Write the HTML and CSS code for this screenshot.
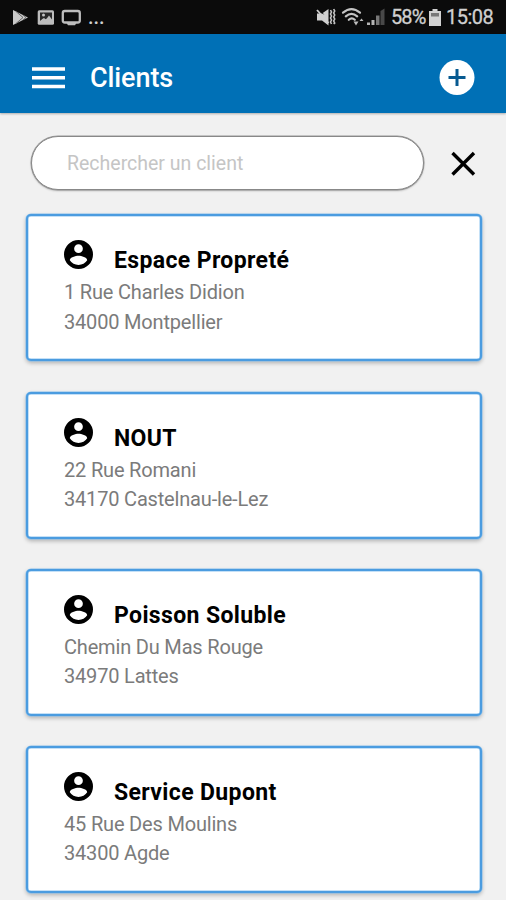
FILE: index.html
```html
<!DOCTYPE html>
<html lang="fr">
<head>
<meta charset="utf-8">
<title>Clients</title>
<link rel="stylesheet" href="styles.css">
</head>
<body>
<svg class="defs" width="0" height="0" aria-hidden="true">
  <symbol id="account" viewBox="2 2 20 20"><path fill-rule="evenodd" d="M12 2a10 10 0 1 0 0 20 10 10 0 0 0 0-20zm0 3a3 3 0 1 1 0 6 3 3 0 0 1 0-6zm0 14.2a7.2 7.2 0 0 1-6-3.2c0-2 4-3.1 6-3.1s6 1.100 6 3.100a7.200 7.200 0 0 1-6 3.200z"/></symbol>
</svg>
<div class="status">
  <svg class="status-icons" width="70" height="34" viewBox="0 0 70 34">
    <path d="M1 10v15l15-7.500z" fill="#c9c9c9"/>
    <path d="M4 11.500l7 6-7 6M11 15l3 2.500-3 2.500" fill="none" stroke="#666" stroke-width="1"/>
    <rect x="25.700" y="10.200" width="16.300" height="14.600" rx="1.500" fill="#bdbdbd"/>
    <path d="M28 12.500h12v8l-3.500-3-3 2-2.500-1-3 3z" fill="#292929"/>
    <circle cx="31.500" cy="15" r="1.500" fill="#c4c4c4"/>
    <path d="M28 21l4-3 2 1.500 3-4 3 4v3H28z" fill="#bdbdbd"/>
    <rect x="50.800" y="11" width="17" height="11.500" rx="2" fill="none" stroke="#bdbdbd" stroke-width="2.300"/>
    <path d="M54.500 23h10l-1.500 2.200h-7z" fill="#bdbdbd"/>
  </svg>
  <span class="dots">...</span>
  <svg class="radio" width="72" height="34" viewBox="315 0 72 34">
    <path d="M317 13.500h5l6.500-4.500v16.500l-6.500-5h-5z" fill="#d0d0d0"/>
    <path d="M317 10l11.500 13" stroke="#d0d0d0" stroke-width="1.800"/>
    <path d="M319.500 10l4 4.300" stroke="#0b0b0b" stroke-width="1"/>
    <path d="M330.500 10l1 2-1 2 1 2-1 2 1 2-1 2 1 2M333.700 9l1 2-1 2 1 2-1 2 1 2-1 2 1 2-1 1" fill="none" stroke="#c4c4c4" stroke-width="1.600"/>
    <g fill="none" stroke="#c4c4c4" stroke-width="2.200" stroke-linecap="round">
      <path d="M343 12.700q8.500-7 17 0M345.800 16.300q5.700-5 11.400 0M348.800 19.800q3-2.700 6 0"/>
    </g>
    <path d="M353.500 21.500h5L356 25.500zM359.500 21h4L361.500 18.500z" fill="#bdbdbd"/>
    <path d="M367 22.500h3V25h-3zM371.500 20h3v5h-3z" fill="#b5b5b5"/>
    <path d="M376 15.500h3.500V25H376z" fill="#777"/>
    <path d="M380.500 11l4-2.500V25h-4z" fill="#484848"/>
  </svg>
  <span class="percent">58%</span>
  <svg class="battery" width="12" height="17" viewBox="0 0 12 17">
    <path d="M3.500 0h5v2H12v15H0V2h3.500z" fill="#d2d2d2"/>
    <path d="M2 4h8v3.500H2z" fill="#777"/>
  </svg>
  <span class="clock">15:08</span>
</div>
<header class="bar">
  <svg class="menu" width="33" height="22" viewBox="0 0 33 22"><path d="M0 2h33M0 10.700h33M0 19.500h33" stroke="#fff" stroke-width="3.600"/></svg>
  <h1 class="title">Clients</h1>
  <svg class="add" width="36" height="36" viewBox="0 0 36 36"><circle cx="18" cy="17.500" r="17.500" fill="#fff"/><path d="M18 9v17M9.500 17.500h17" stroke="#075a91" stroke-width="3"/></svg>
</header>
<main class="content">
  <div class="search">
    <div class="field">Rechercher un client</div>
    <svg class="clear" width="26" height="26" viewBox="0 0 26 26"><path d="M2.500 3l21.500 21.500M24 3L2.500 24.500" stroke="#000" stroke-width="3.400"/></svg>
  </div>
  <div class="list">
    <article class="card">
      <div class="head"><svg class="avatar"><use href="#account"/></svg><h2 class="name">Espace Propreté</h2></div>
      <p class="line">1 Rue Charles Didion</p>
      <p class="line">34000 Montpellier</p>
    </article>
    <article class="card">
      <div class="head"><svg class="avatar"><use href="#account"/></svg><h2 class="name">NOUT</h2></div>
      <p class="line">22 Rue Romani</p>
      <p class="line">34170 Castelnau-le-Lez</p>
    </article>
    <article class="card">
      <div class="head"><svg class="avatar"><use href="#account"/></svg><h2 class="name">Poisson Soluble</h2></div>
      <p class="line">Chemin Du Mas Rouge</p>
      <p class="line">34970 Lattes</p>
    </article>
    <article class="card">
      <div class="head"><svg class="avatar"><use href="#account"/></svg><h2 class="name">Service Dupont</h2></div>
      <p class="line">45 Rue Des Moulins</p>
      <p class="line">34300 Agde</p>
    </article>
  </div>
</main>
</body>
</html>
```

FILE: styles.css
```css
* { box-sizing: border-box; }
body {
  margin: 0;
  height: 900px;
  overflow: hidden;
  background: #f1f1f1;
  font-family: Roboto, "Liberation Sans", sans-serif;
}
h1, h2, p { margin: 0; }
.defs { position: absolute; }
.status {
  display: flex;
  align-items: center;
  height: 34px;
  padding-left: 12px;
  background: #0b0b0b;
  color: #d0d0d0;
  font-size: 20px;
  line-height: 37px;
}
.status svg { flex: none; }
.dots { width: 20px; margin-left: 6px; font-weight: 500; }
.radio { margin-left: 207px; }
.percent { width: 34px; margin-left: 4px; letter-spacing: -0.9px; -webkit-text-stroke: .3px #d0d0d0; }
.battery { margin-left: 4px; }
.clock { margin-left: 5px; letter-spacing: -0.5px; -webkit-text-stroke: .3px #d0d0d0; }
.bar {
  display: flex;
  align-items: center;
  height: 79px;
  padding: 8px 31px 0 32px;
  background: #0070b6;
  box-shadow: 0 1px 2px rgba(0, 0, 0, .28);
}
.title {
  margin-left: 25px;
  color: #fff;
  font-size: 27px;
  font-weight: 500;
  letter-spacing: -0.1px;
  line-height: 38px;
}
.add { margin-left: auto; }
.content { padding: 23px 24px 0 26px; }
.search { display: flex; align-items: center; padding-left: 5px; }
.field {
  width: 393px;
  height: 54px;
  padding-left: 35px;
  border: 1px solid #888;
  border-radius: 27px;
  background: #fff;
  box-shadow: 0 0 0 .5px #999, 0 1px 2px rgba(0, 0, 0, .25);
  color: #c5c5c5;
  font-size: 19.500px;
  line-height: 53px;
}
.clear { margin-left: 26px; }
.list { display: grid; gap: 30.200px; margin-top: 24.400px; }
.card {
  height: 147px;
  padding: 24px 36px 0;
  border: 2px solid #4b9ce0;
  border-radius: 5px;
  background: #fff;
  box-shadow: inset 0 0 0 .5px #8ac2ef, 0 0 0 .5px #8ac2ef, 0 2px 4px rgba(0, 0, 0, .28);
}
.head { display: flex; height: 38px; }
.avatar { width: 29px; height: 29px; }
.name {
  margin-left: 21px;
  color: #000;
  font-size: 23px;
  font-weight: 700;
  letter-spacing: .37px;
  line-height: 42px;
  white-space: nowrap;
}
.line { color: #7b7b7b; font-size: 20px; line-height: 29.500px; letter-spacing: -0.180px; }
```
